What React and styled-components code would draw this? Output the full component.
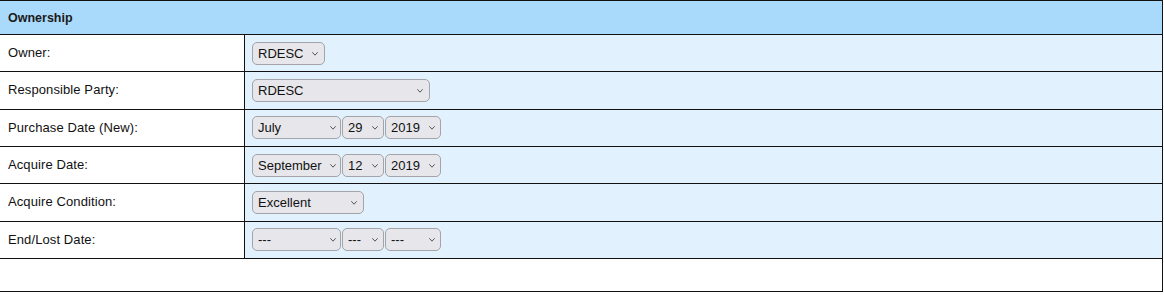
import React from "react";
import styled, { createGlobalStyle } from "styled-components";

const Global = createGlobalStyle`
  html, body {
    margin: 0;
    padding: 0;
    background: #ffffff;
  }
  body {
    font-family: "Liberation Sans", Arial, Helvetica, sans-serif;
    font-size: 13px;
    color: #111;
  }
`;

const Table = styled.div`
  width: 1163px;
  border-right: 1px solid #111;
  box-sizing: border-box;
`;

const Header = styled.div`
  height: 34px;
  box-sizing: border-box;
  border-top: 1px solid #111;
  background: #aadafb;
  display: flex;
  align-items: center;
  padding-left: 8px;
  padding-top: 1px;
  font-weight: 700;
  font-size: 12.5px;
  color: #1a1a1a;
`;

const Row = styled.div`
  display: grid;
  grid-template-columns: 244px 1px 1fr;
  height: 37.33px;
  box-sizing: border-box;
  border-top: 1px solid #111;
`;

const Label = styled.div`
  display: flex;
  align-items: center;
  padding-left: 8px;
  padding-bottom: 1px;
  background: #fff;
  font-size: 13px;
  letter-spacing: 0.1px;
`;

const Divider = styled.div`
  background: #111;
`;

const Value = styled.div`
  display: flex;
  align-items: center;
  gap: 1px;
  padding-left: 7px;
  background: #e1f1fd;
`;

const Blank = styled.div`
  height: 34px;
  box-sizing: border-box;
  border-top: 1px solid #111;
  border-bottom: 1px solid #111;
`;

const SelectWrap = styled.span`
  position: relative;
  display: inline-flex;
  width: ${(p) => p.$w}px;
  height: 23px;
`;

const NativeSelect = styled.select`
  appearance: none;
  -webkit-appearance: none;
  width: 100%;
  height: 100%;
  margin: 0;
  box-sizing: border-box;
  border: 1px solid #a3a3a8;
  border-radius: 5px;
  background: #e7e7eb;
  padding: 0 16px 0 5px;
  font-family: "Liberation Sans", Arial, Helvetica, sans-serif;
  font-size: 13px;
  color: #111;
  outline: none;
`;

const Chevron = styled.svg`
  position: absolute;
  right: ${(p) => p.$r}px;
  top: 10px;
  width: 6px;
  height: 4px;
  pointer-events: none;
`;

function Select({ w, value, options, r = 7 }) {
  const opts = options || [value];
  return (
    <SelectWrap $w={w}>
      <NativeSelect defaultValue={value}>
        {opts.map((o) => (
          <option key={o}>{o}</option>
        ))}
      </NativeSelect>
      <Chevron $r={r} viewBox="0 0 6 4">
        <path d="M0.6 0.6 L3 3.2 L5.4 0.6" fill="none" stroke="#555" strokeWidth="1" strokeLinecap="round" strokeLinejoin="round" />
      </Chevron>
    </SelectWrap>
  );
}

const months = ["January", "February", "March", "April", "May", "June", "July", "August", "September", "October", "November", "December"];

function DateSelect({ month, day, year }) {
  return (
    <>
      <Select w={89} value={month} r={5} options={["---", ...months]} />
      <Select w={42} value={day} r={6} />
      <Select w={56} value={year} r={6} />
    </>
  );
}

const rows = [
  { label: "Owner:", field: <Select w={73} value="RDESC" /> },
  { label: "Responsible Party:", field: <Select w={178} value="RDESC" /> },
  { label: "Purchase Date (New):", field: <DateSelect month="July" day="29" year="2019" /> },
  { label: "Acquire Date:", field: <DateSelect month="September" day="12" year="2019" /> },
  { label: "Acquire Condition:", field: <Select w={112} value="Excellent" options={["Excellent", "Good", "Fair", "Poor"]} /> },
  { label: "End/Lost Date:", field: <DateSelect month="---" day="---" year="---" /> },
];

export default function App() {
  return (
    <>
      <Global />
      <Table>
        <Header>Ownership</Header>
        {rows.map((r) => (
          <Row key={r.label}>
            <Label>{r.label}</Label>
            <Divider />
            <Value>{r.field}</Value>
          </Row>
        ))}
        <Blank />
      </Table>
    </>
  );
}
